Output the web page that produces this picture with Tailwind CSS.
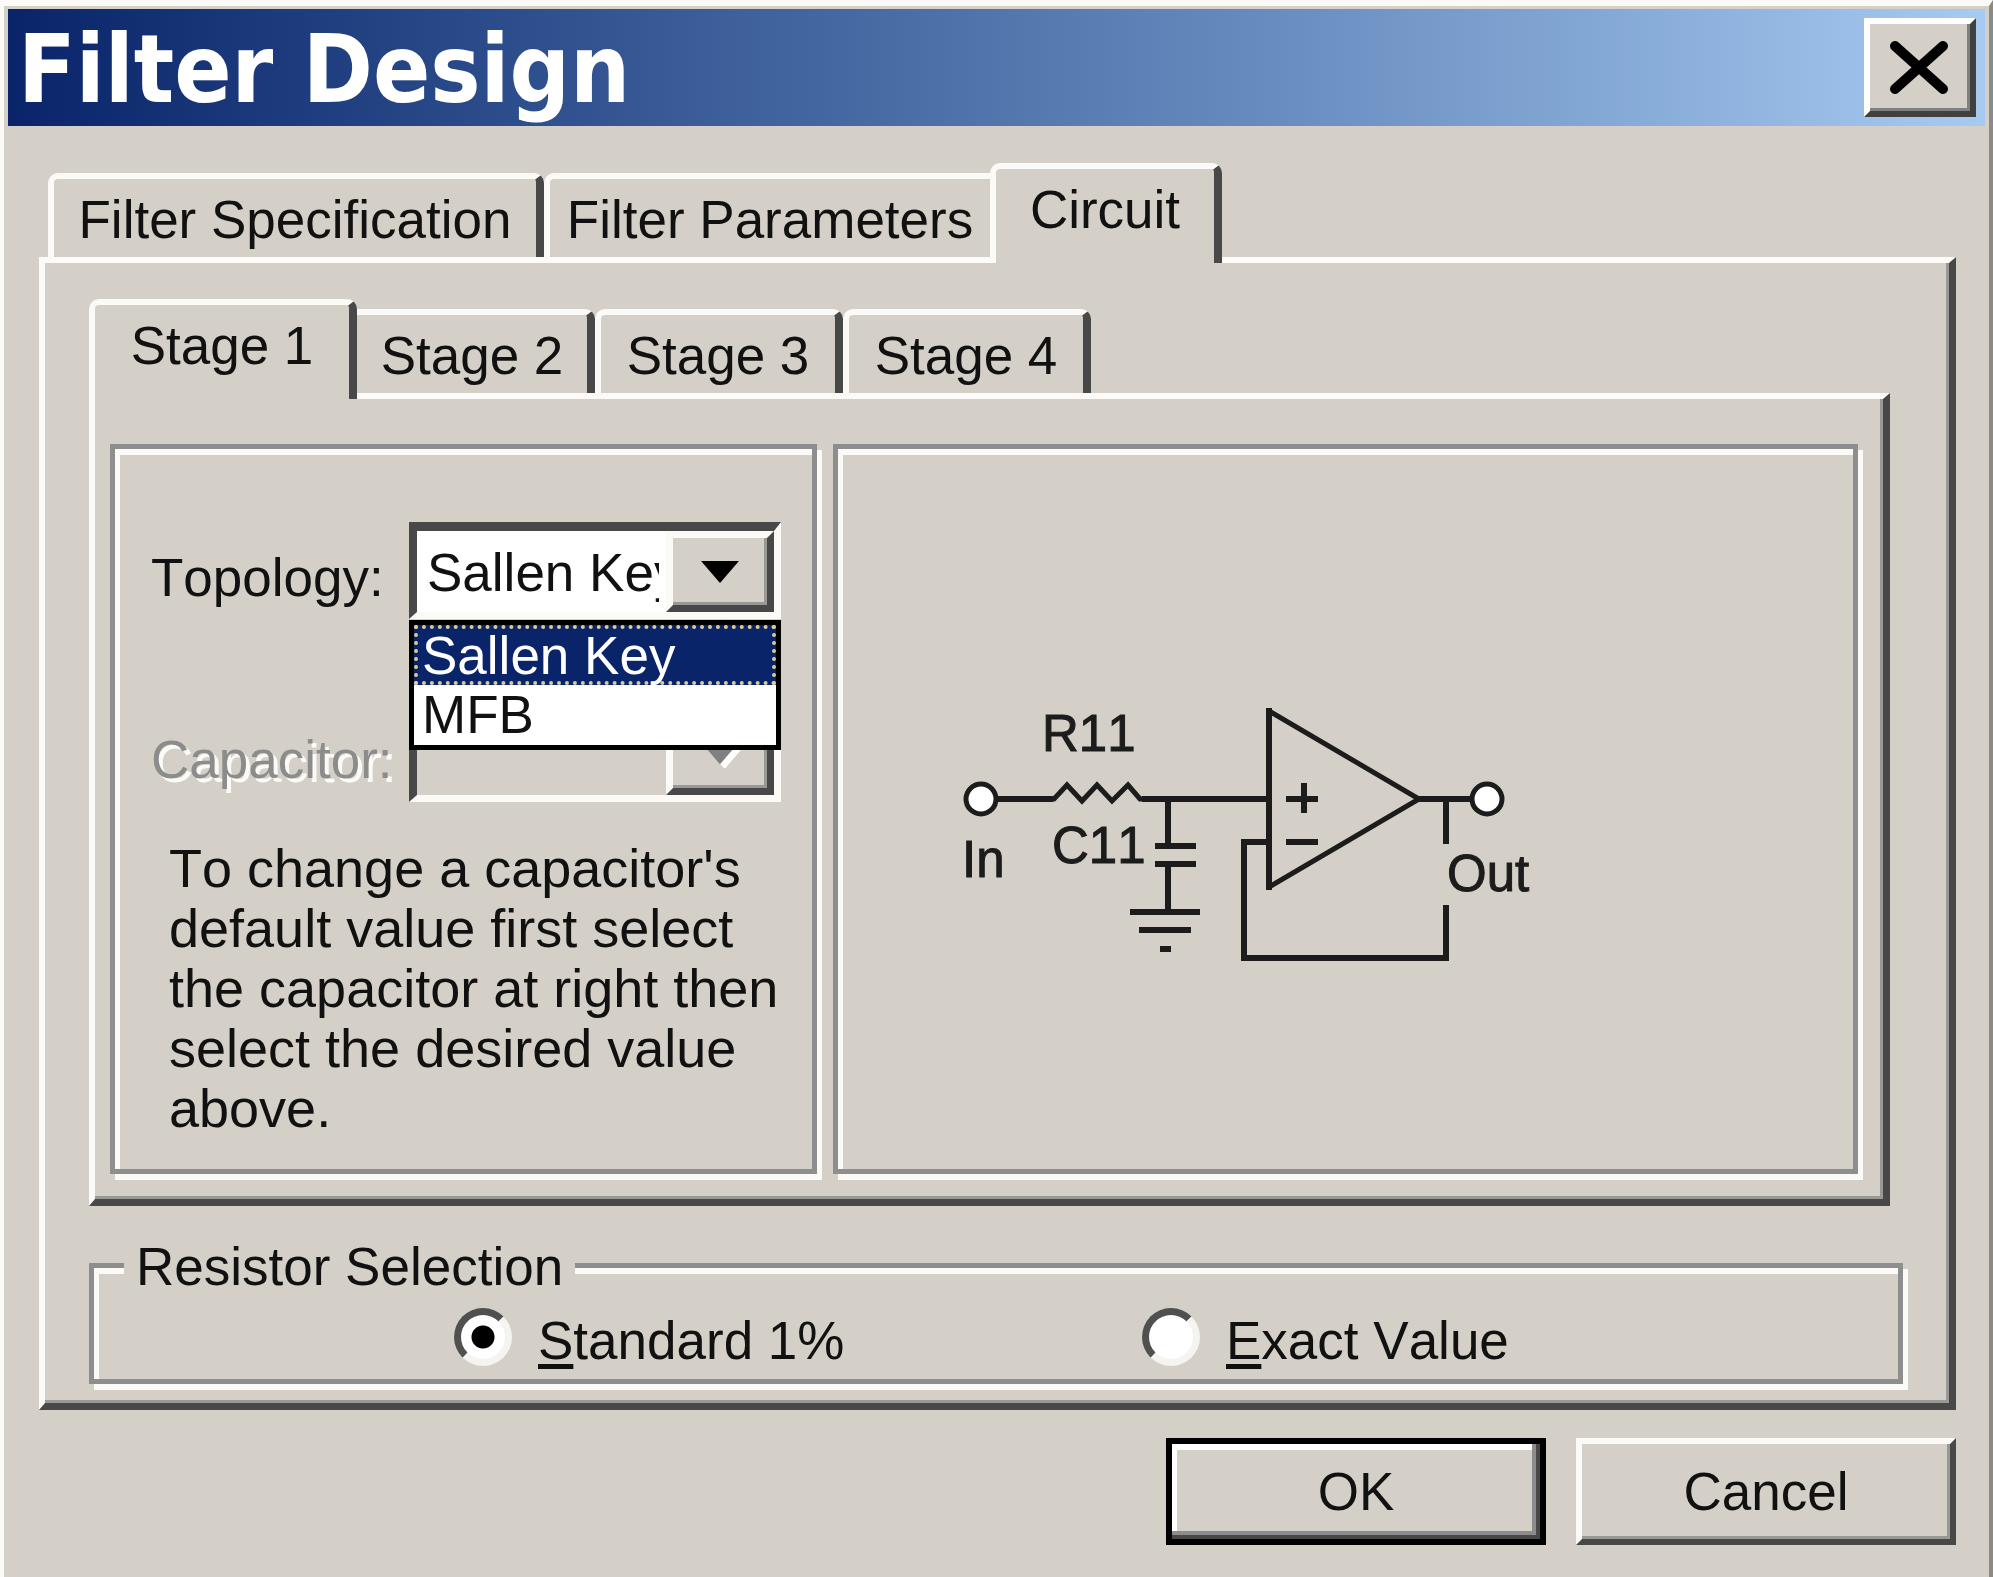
<!DOCTYPE html>
<html lang="en">
<head>
<meta charset="utf-8">
<meta name="viewport" content="width=device-width, initial-scale=1">
<title>Filter Design</title>
<script src="https://cdn.jsdelivr.net/npm/@tailwindcss/browser@4"></script>
</head>
<body class="bg-[#d4d0c8] font-['Liberation_Sans',Arial,sans-serif] text-[53px] leading-[60px] text-[#111] [font-kerning:none]">
<div role="dialog" aria-labelledby="title" class="flex min-h-screen flex-col border-t-[6px] border-r-4 border-l-4 border-t-[#fbfaf6] border-r-[#8c8a86] border-l-[#fbfaf6] px-1 pt-[3px] pb-6">

  <!-- Title bar -->
  <header class="flex h-[117px] items-center justify-between bg-linear-to-r from-[#0a246a] to-[#a6caf0] pr-[9px] pl-[10px]">
    <h1 id="title" class="pt-1 font-['DejaVu_Sans_Condensed','DejaVu_Sans',sans-serif] text-[94px] leading-[108px] font-bold text-white">Filter Design</h1>
    <button type="button" aria-label="Close" class="flex h-[99px] w-[112px] items-center justify-center border-[6px] border-t-white border-r-[#404040] border-b-[#404040] border-l-white bg-[#d4d0c8] shadow-[inset_-3px_-3px_0_#808080]">
      <svg width="62" height="56" viewBox="0 0 62 56" fill="none" stroke="#000" stroke-width="10" stroke-linecap="round" aria-hidden="true"><path d="M6 6 54 49M54 6 6 49"/></svg>
    </button>
  </header>

  <main class="flex flex-col pt-[37px] pr-[29px] pl-[31px]">
    <!-- Main tabs -->
    <div role="tablist" class="flex items-end pl-[9px]">
      <button type="button" role="tab" aria-selected="false" class="h-[84px] w-[496px] rounded-t-[10px] border-t-[6px] border-r-8 border-l-[6px] border-t-[#fbfaf6] border-r-[#484848] border-l-[#fbfaf6] pt-[11px] pb-[7px] whitespace-nowrap">Filter Specification</button>
      <button type="button" role="tab" aria-selected="false" class="h-[84px] w-[446px] rounded-tl-[10px] border-t-[6px] border-l-[6px] border-t-[#fbfaf6] border-l-[#fbfaf6] pt-[11px] pb-[7px] whitespace-nowrap">Filter Parameters</button>
      <button type="button" role="tab" aria-selected="true" class="relative -mb-[6px] h-[100px] w-[232px] rounded-t-[10px] border-t-[6px] border-r-8 border-l-[6px] border-t-[#fbfaf6] border-r-[#484848] border-l-[#fbfaf6] bg-[#d4d0c8] pt-[11px] pb-[23px]">Circuit</button>
    </div>

    <section role="tabpanel" class="border-t-[6px] border-r-[7px] border-b-[7px] border-l-[6px] border-t-[#fbfaf6] border-r-[#484848] border-b-[#484848] border-l-[#fbfaf6] pt-9 pr-[46px] pb-[19px] pl-11 shadow-[inset_-3px_-3px_0_#9a9894]">
      <!-- Stage tabs -->
      <div role="tablist" class="flex items-end">
        <button type="button" role="tab" aria-selected="true" class="relative -mb-[6px] h-[100px] w-[268px] rounded-t-[10px] border-t-[6px] border-r-8 border-l-[6px] border-t-[#fbfaf6] border-r-[#484848] border-l-[#fbfaf6] bg-[#d4d0c8] pt-[11px] pb-[23px]">Stage 1</button>
        <button type="button" role="tab" aria-selected="false" class="h-[84px] w-[238px] rounded-tr-[10px] border-t-[6px] border-r-8 border-t-[#fbfaf6] border-r-[#484848] pt-[11px] pb-[7px]">Stage 2</button>
        <button type="button" role="tab" aria-selected="false" class="h-[84px] w-[248px] rounded-t-[10px] border-t-[6px] border-r-8 border-l-[6px] border-t-[#fbfaf6] border-r-[#484848] border-l-[#fbfaf6] pt-[11px] pb-[7px]">Stage 3</button>
        <button type="button" role="tab" aria-selected="false" class="h-[84px] w-[248px] rounded-t-[10px] border-t-[6px] border-r-8 border-l-[6px] border-t-[#fbfaf6] border-r-[#484848] border-l-[#fbfaf6] pt-[11px] pb-[7px]">Stage 4</button>
      </div>

      <div role="tabpanel" class="mr-[13px] grid grid-cols-[707fr_1025fr] gap-4 border-t-[6px] border-r-[7px] border-b-[7px] border-l-[6px] border-t-[#fbfaf6] border-r-[#484848] border-b-[#484848] border-l-[#fbfaf6] pt-[45px] pr-[25px] pb-[25px] pl-[15px] shadow-[inset_-3px_-3px_0_#9a9894]">
        <!-- Topology and capacitor settings -->
        <div class="border-[5px] border-[#8e8e8e] pt-[73px] pb-[31px] pl-8 shadow-[5px_6px_0_#fbfaf6,inset_5px_6px_0_#fbfaf6]">
          <div class="flex items-start">
            <label for="topology" class="w-[262px] pt-[26px] pl-1">Topology:</label>
            <div class="relative h-[97px] w-[372px]">
              <select id="topology" class="h-full w-full appearance-none border-t-[9px] border-r-[7px] border-b-[7px] border-l-8 border-t-[#484848] border-r-[#fbfaf6] border-b-[#fbfaf6] border-l-[#484848] bg-white pt-[2px] pr-[115px] pl-[10px]">
                <option selected>Sallen Key</option>
                <option>MFB</option>
              </select>
              <span class="pointer-events-none absolute top-[9px] right-[7px] bottom-[7px] flex w-[108px] items-center justify-center border-[7px] border-t-[#fbfaf6] border-r-[#484848] border-b-[#484848] border-l-[#fbfaf6] bg-[#d4d0c8] shadow-[inset_-3px_-3px_0_#9a9894]">
                <svg width="38" height="22" viewBox="0 0 38 22" aria-hidden="true"><path d="M0 0H38L19 22Z" fill="#000"/></svg>
              </span>
              <ul role="listbox" aria-label="Topology options" class="absolute top-[98px] left-0 z-10 w-full border-[5px] border-black bg-white">
                <li role="option" aria-selected="true" class="h-[60px] border-4 border-dotted border-[#d8cc9c] bg-[#0a246a] pl-1 leading-[54px] text-white">Sallen Key</li>
                <li role="option" aria-selected="false" class="h-[60px] pl-2">MFB</li>
              </ul>
            </div>
          </div>
          <div class="mt-[86px] flex items-start">
            <label for="capacitor" class="w-[262px] pt-[25px] pl-1 text-[#8c8c8c] [text-shadow:4px_4px_0_#fbfaf6]">Capacitor:</label>
            <div class="relative h-[97px] w-[372px]">
              <select id="capacitor" disabled class="h-full w-full appearance-none border-t-[9px] border-r-[7px] border-b-[7px] border-l-8 border-t-[#484848] border-r-[#fbfaf6] border-b-[#fbfaf6] border-l-[#484848] bg-[#d4d0c8] opacity-100"></select>
              <span class="pointer-events-none absolute top-[9px] right-[7px] bottom-[7px] flex w-[108px] items-center justify-center border-[7px] border-t-[#fbfaf6] border-r-[#484848] border-b-[#484848] border-l-[#fbfaf6] bg-[#d4d0c8] shadow-[inset_-3px_-3px_0_#9a9894]">
                <svg width="44" height="26" viewBox="-3 -2 44 28" aria-hidden="true"><path d="M5 5H43L24 27Z" fill="#fff"/><path d="M0 0H38L19 22Z" fill="#808080"/></svg>
              </span>
            </div>
          </div>
          <p class="pt-9 pl-[22px] whitespace-nowrap text-[54px]">To change a capacitor's<br>default value first select<br>the capacitor at right then<br>select the desired value<br>above.</p>
        </div>

        <!-- Circuit diagram -->
        <div class="border-[5px] border-[#8e8e8e] pt-[241px] pl-[111px] shadow-[5px_6px_0_#fbfaf6,inset_5px_6px_0_#fbfaf6]">
          <svg width="620" height="290" viewBox="950 690 620 290" role="img" aria-label="Stage 1 circuit" fill="none" stroke="#1c1c1c" stroke-width="6">
            <path d="M999 799H1054M1143 799H1270M1420 799H1472"/>
            <path d="M1052 799H1055L1068 785 1083 801 1098 785 1113 801 1129 785 1141 799H1145" stroke-width="5"/>
            <path d="M1169 799V846M1156 846H1197M1156 864H1197M1169 864V912M1131 912H1201M1140 930H1192M1161 949H1172"/>
            <path d="M1270 708V890"/>
            <path d="M1270 711 1420 799 1270 887" stroke-width="5"/>
            <path d="M1287 799H1319M1305 783V813M1287 842H1319"/>
            <path d="M1270 842H1245V958H1447V905M1447 799V844"/>
            <circle cx="982" cy="799" r="15" fill="#fff" stroke-width="5"/>
            <circle cx="1488" cy="799" r="15" fill="#fff" stroke-width="5"/>
            <g fill="#1c1c1c" stroke="#1c1c1c" stroke-width="1" font-size="51">
              <text x="1043" y="751">R11</text>
              <text x="1053" y="863">C11</text>
              <text x="963" y="877">In</text>
              <text x="1448" y="891">Out</text>
            </g>
          </svg>
        </div>
      </div>

      <!-- Resistor selection -->
      <fieldset class="mt-[27px] border-[5px] border-[#8e8e8e] shadow-[5px_6px_0_#fbfaf6,inset_5px_6px_0_#fbfaf6]">
        <legend class="ml-[30px] bg-[#d4d0c8] px-3 pt-1">Resistor Selection</legend>
        <div class="grid grid-cols-[688fr_756fr] pt-[14px] pb-2 pl-[360px]">
          <label class="flex items-center gap-[26px]"><input type="radio" name="resistor" checked class="-mt-2 size-[58px] appearance-none rounded-full border-[7px] border-t-[#505050] border-r-[#f6f4f0] border-b-[#f6f4f0] border-l-[#505050] bg-white checked:bg-[radial-gradient(circle,#000_11px,#fff_12px)]"><span><span class="underline decoration-[5px] underline-offset-[5px]">S</span>tandard 1%</span></label>
          <label class="flex items-center gap-[26px]"><input type="radio" name="resistor" class="-mt-2 size-[58px] appearance-none rounded-full border-[7px] border-t-[#505050] border-r-[#f6f4f0] border-b-[#f6f4f0] border-l-[#505050] bg-white checked:bg-[radial-gradient(circle,#000_11px,#fff_12px)]"><span><span class="underline decoration-[5px] underline-offset-[5px]">E</span>xact Value</span></label>
        </div>
      </fieldset>
    </section>

    <!-- Dialog actions -->
    <footer class="mt-7 flex justify-end gap-[30px]">
      <button type="button" class="h-[107px] w-[380px] border-[6px] border-black shadow-[inset_-4px_-4px_0_#484848,inset_-8px_-8px_0_#8c8c8c,inset_5px_6px_0_#fff]">OK</button>
      <button type="button" class="h-[107px] w-[380px] border-[6px] border-t-[#fbfaf6] border-r-[#484848] border-b-[#484848] border-l-[#fbfaf6] shadow-[inset_-3px_-3px_0_#9a9894]">Cancel</button>
    </footer>
  </main>
</div>
</body>
</html>
